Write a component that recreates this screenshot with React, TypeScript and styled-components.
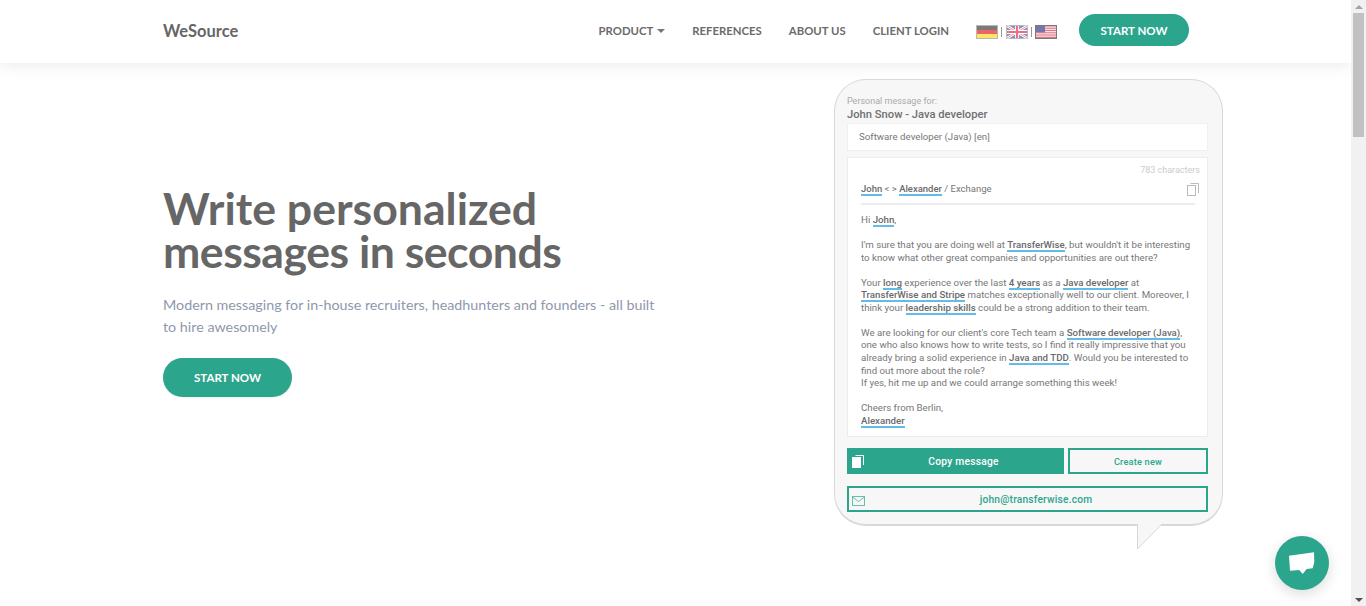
import React from 'react'
import styled, { createGlobalStyle } from 'styled-components'

const GREEN = '#2ca58d'
const BLUE = '#62bce8'

const GlobalStyle = createGlobalStyle`
  html, body {
    margin: 0;
    padding: 0;
    height: 606px;
    overflow: hidden;
    background: #fff;
  }
  * {
    box-sizing: border-box;
  }
`

const Shell = styled.div`
  display: flex;
  width: 1366px;
  height: 606px;
  font-family: Lato, 'Liberation Sans', sans-serif;
`
const Page = styled.div`
  flex: 1;
  min-width: 0;
`

// scrollbar
const Scrollbar = styled.div`
  width: 15px;
  background: #f1f1f1;
  display: flex;
  flex-direction: column;
  align-items: center;
`
const ScrollArrow = styled.div<{ $down?: boolean }>`
  width: 15px;
  height: 13px;
  flex: none;
  display: flex;
  align-items: center;
  justify-content: center;
  &::after {
    content: '';
    border-left: 4px solid transparent;
    border-right: 4px solid transparent;
    ${(p) => (p.$down ? 'border-top: 4px solid #505050;' : 'border-bottom: 4px solid #a3a3a3;')}
  }
`
const ScrollThumb = styled.div`
  width: 11px;
  height: 124px;
  background: #c1c1c1;
  flex: none;
`
const ScrollSpace = styled.div`
  flex: 1;
`

// navbar
const Nav = styled.header`
  height: 63px;
  background: #fff;
  box-shadow: 0 2px 14px rgba(120, 130, 160, 0.16);
  display: flex;
  align-items: center;
  justify-content: space-between;
  padding: 0 162px 3px 163px;
`
const Logo = styled.div`
  font-size: 16.5px;
  font-weight: 700;
  color: #666;
  padding-top: 1px;
`
const NavList = styled.nav`
  display: flex;
  align-items: center;
`
const NavLink = styled.a`
  font-size: 11.35px;
  font-weight: 700;
  color: #6b6b6b;
  margin-right: 27px;
  padding-top: 1px;
  display: flex;
  align-items: center;
`
const Caret = styled.span`
  display: inline-block;
  margin-left: 4px;
  border-left: 4px solid transparent;
  border-right: 4px solid transparent;
  border-top: 4px solid #777;
`
const Flags = styled.div`
  display: flex;
  align-items: center;
  margin-right: 22px;
  padding-top: 3px;
  opacity: 0.6;
`
const FlagDivider = styled.span<{ $narrow?: boolean }>`
  width: 1px;
  height: 10px;
  background: #555;
  margin: 0 ${(p) => (p.$narrow ? 3 : 4)}px 0 3px;
`
const NavButton = styled.a`
  width: 110px;
  height: 32px;
  border-radius: 16px;
  background: ${GREEN};
  color: #fff;
  font-size: 11.5px;
  font-weight: 700;
  display: flex;
  align-items: center;
  justify-content: center;
`

// hero
const Hero = styled.main`
  display: flex;
  justify-content: space-between;
  padding: 16px 128px 0 163px;
`
const Copy = styled.section`
  width: 500px;
  padding-top: 107px;
`
const Title = styled.h1`
  margin: 0;
  font-size: 44.6px;
  line-height: 43px;
  font-weight: 700;
  color: #666;
`
const TitleLine = styled.span<{ $tight?: boolean }>`
  display: block;
  white-space: nowrap;
  letter-spacing: ${(p) => (p.$tight ? '-0.5px' : '0')};
`
const Lead = styled.p`
  margin: 22px 0 0;
  font-size: 14.3px;
  line-height: 22px;
  color: #8f97ac;
`
const HeroButton = styled.a`
  margin-top: 20px;
  width: 129px;
  height: 39px;
  border-radius: 20px;
  background: ${GREEN};
  color: #fff;
  font-size: 11.5px;
  font-weight: 700;
  display: flex;
  align-items: center;
  justify-content: center;
  box-shadow: 0 1px 3px rgba(0, 0, 0, 0.06);
`

// message card
const Bubble = styled.section`
  position: relative;
  width: 389px;
  height: 447px;
  background: #f7f7f7;
  border: 1px solid #d8d8d8;
  border-bottom-width: 2px;
  border-radius: 32px;
  padding: 16px 14px 0 12px;
  font-family: Roboto, 'Liberation Sans', sans-serif;
`
const BubbleTail = styled.svg`
  position: absolute;
  left: 302px;
  bottom: -26px;
`
const Small = styled.div`
  font-size: 9px;
  line-height: 11px;
  color: #aaa;
`
const Recipient = styled.div`
  font-size: 11.2px;
  line-height: 15px;
  font-weight: 500;
  color: #707070;
  margin-bottom: 1px;
`
const Select = styled.div`
  height: 28px;
  background: #fff;
  border: 1px solid #f0f0f0;
  font-size: 9.7px;
  line-height: 26px;
  padding-left: 11px;
  color: #777;
`
const MessageBox = styled.div`
  margin-top: 6px;
  height: 280px;
  background: #fff;
  border: 1px solid #ececec;
  padding: 6px 7px 0 13px;
`
const Counter = styled.div`
  text-align: right;
  font-size: 9px;
  line-height: 12px;
  color: #ccc;
`
const MessageHead = styled.div`
  position: relative;
  margin: 6px 5px 0 0;
  height: 23px;
  border-bottom: 2px solid #ececec;
  font-size: 9.5px;
  line-height: 14px;
  color: #777;
`
const CopyGlyph = styled.div`
  position: absolute;
  right: -4px;
  top: 1px;
  display: flex;
`
const Body = styled.div`
  margin-top: 9px;
  font-size: 9.7px;
  line-height: 12.55px;
  color: #777;
  white-space: nowrap;
`
const Para = styled.p`
  margin: 0 0 12.55px;
`
const Mark = styled.span`
  font-weight: 500;
  color: #6a6a6a;
  border-bottom: 2px solid ${BLUE};
`
const ActionRow = styled.div`
  display: flex;
  gap: 4px;
  margin-top: 11px;
`
const CopyButton = styled.div`
  position: relative;
  width: 217px;
  height: 26px;
  padding-left: 16px;
  background: ${GREEN};
  color: #fff;
  font-size: 10.3px;
  font-weight: 500;
  display: flex;
  align-items: center;
  justify-content: center;
  letter-spacing: 0.2px;
`
const OutlineButton = styled.div<{ $small?: boolean; $inset?: number }>`
  position: relative;
  flex: 1;
  height: 26px;
  padding-left: ${(p) => p.$inset ?? 0}px;
  border: 2px solid ${GREEN};
  color: ${GREEN};
  font-size: ${(p) => (p.$small ? '9.2px' : '10.2px')};
  font-weight: 500;
  display: flex;
  align-items: center;
  justify-content: center;
  letter-spacing: 0.2px;
`
const EmailRow = styled.div`
  margin-top: 12px;
  display: flex;
`
const CopyIconSlot = styled.div`
  position: absolute;
  left: 5px;
  top: 7px;
  display: flex;
`
const MailIcon = styled.svg`
  position: absolute;
  left: 3px;
  top: 8px;
`

// chat
const ChatFab = styled.div`
  position: absolute;
  left: 1275px;
  top: 536px;
  width: 54px;
  height: 54px;
  border-radius: 50%;
  background: ${GREEN};
  box-shadow: 0 4px 14px rgba(0, 0, 0, 0.14);
  display: flex;
  align-items: center;
  justify-content: center;
`

const GermanFlag = () => (
  <svg width="22" height="14" viewBox="0 0 22 14">
    <rect width="22" height="14" fill="#888" />
    <rect x="1" y="1" width="20" height="4" fill="#222" />
    <rect x="1" y="5" width="20" height="4" fill="#e00000" />
    <rect x="1" y="9" width="20" height="4" fill="#ffd500" />
  </svg>
)

const UkFlag = () => (
  <svg width="22" height="14" viewBox="0 0 22 14">
    <rect width="22" height="14" fill="#888" />
    <rect x="1" y="1" width="20" height="12" fill="#2b4ea0" />
    <path d="M1 1l20 12M21 1L1 13" stroke="#fff" strokeWidth="2.6" />
    <path d="M1 1l20 12M21 1L1 13" stroke="#e0304a" strokeWidth="0.8" />
    <path d="M11 1v12M1 7h20" stroke="#fff" strokeWidth="4" />
    <path d="M11 1v12M1 7h20" stroke="#e0102f" strokeWidth="2.2" />
  </svg>
)

const UsFlag = () => (
  <svg width="22" height="14" viewBox="0 0 22 14">
    <rect width="22" height="14" fill="#222" />
    <rect x="1" y="1" width="20" height="12" fill="#fff" />
    <path d="M1 1.9h20M1 3.7h20M1 5.5h20M1 7.3h20M1 9.1h20M1 10.9h20M1 12.5h20" stroke="#c8102e" strokeWidth="0.95" />
    <rect x="1" y="1" width="9" height="6.4" fill="#1c1c72" />
  </svg>
)

const PagesIcon = ({ color, solid }: { color: string; solid?: boolean }) => (
  <svg width="12" height="13" viewBox="0 0 12 13" fill="none">
    <path d="M3.5 0.5h8v9.5" stroke={color} />
    <rect x="0.5" y="2.5" width="8" height="10" fill={solid ? color : 'none'} stroke={color} />
  </svg>
)

export default function App() {
  return (
    <Shell>
      <GlobalStyle />
      <Page>
        <Nav>
          <Logo>WeSource</Logo>
          <NavList>
            <NavLink>
              PRODUCT
              <Caret />
            </NavLink>
            <NavLink>REFERENCES</NavLink>
            <NavLink>ABOUT US</NavLink>
            <NavLink>CLIENT LOGIN</NavLink>
            <Flags>
              <GermanFlag />
              <FlagDivider />
              <UkFlag />
              <FlagDivider $narrow />
              <UsFlag />
            </Flags>
            <NavButton>START NOW</NavButton>
          </NavList>
        </Nav>
        <Hero>
          <Copy>
            <Title>
              <TitleLine>Write personalized</TitleLine>
              <TitleLine $tight>messages in seconds</TitleLine>
            </Title>
            <Lead>Modern messaging for in-house recruiters, headhunters and founders - all built to hire awesomely</Lead>
            <HeroButton>START NOW</HeroButton>
          </Copy>
          <Bubble>
            <Small>Personal message for:</Small>
            <Recipient>John Snow - Java developer</Recipient>
            <Select>Software developer (Java) [en]</Select>
            <MessageBox>
              <Counter>783 characters</Counter>
              <MessageHead>
                <Mark>John</Mark> &lt; &gt; <Mark>Alexander</Mark> / Exchange
                <CopyGlyph>
                  <PagesIcon color="#bbb" />
                </CopyGlyph>
              </MessageHead>
              <Body>
                <Para>
                  Hi <Mark>John</Mark>,
                </Para>
                <Para>
                  I'm sure that you are doing well at <Mark>TransferWise</Mark>, but wouldn't it be interesting
                  <br />
                  to know what other great companies and opportunities are out there?
                </Para>
                <Para>
                  Your <Mark>long</Mark> experience over the last <Mark>4 years</Mark> as a <Mark>Java developer</Mark> at
                  <br />
                  <Mark>TransferWise and Stripe</Mark> matches exceptionally well to our client. Moreover, I
                  <br />
                  think your <Mark>leadership skills</Mark> could be a strong addition to their team.
                </Para>
                <Para>
                  We are looking for our client's core Tech team a <Mark>Software developer (Java)</Mark>,
                  <br />
                  one who also knows how to write tests, so I find it really impressive that you
                  <br />
                  already bring a solid experience in <Mark>Java and TDD</Mark>. Would you be interested to
                  <br />
                  find out more about the role?
                  <br />
                  If yes, hit me up and we could arrange something this week!
                </Para>
                <Para>
                  Cheers from Berlin,
                  <br />
                  <Mark>Alexander</Mark>
                </Para>
              </Body>
            </MessageBox>
            <ActionRow>
              <CopyButton>
                <CopyIconSlot>
                  <PagesIcon color="#fff" solid />
                </CopyIconSlot>
                Copy message
              </CopyButton>
              <OutlineButton $small>Create new</OutlineButton>
            </ActionRow>
            <EmailRow>
              <OutlineButton $inset={17}>
                <MailIcon width="13" height="10" viewBox="0 0 13 10" fill="none">
                  <rect x="0.5" y="0.5" width="12" height="9" stroke={GREEN} strokeOpacity="0.7" />
                  <path d="M0.5 1l6 4.5 6-4.5" stroke={GREEN} strokeOpacity="0.7" />
                </MailIcon>
                john@transferwise.com
              </OutlineButton>
            </EmailRow>
            <BubbleTail width="30" height="26" viewBox="0 0 30 26">
              <path d="M0.5 0V25L25 0" fill="#f7f7f7" />
              <path d="M0.5 0V25L25 0" fill="none" stroke="#d8d8d8" strokeWidth="1" />
            </BubbleTail>
          </Bubble>
        </Hero>
      </Page>
      <Scrollbar>
        <ScrollArrow />
        <ScrollThumb />
        <ScrollSpace />
        <ScrollArrow $down />
      </Scrollbar>
      <ChatFab>
        <svg width="28" height="24" viewBox="0 0 28 24">
          <path d="M1 4.7L26 1.3 26.3 11 24.7 17.3 18.7 18 14.7 23 11.3 19 2 19.7Z" fill="#fff" />
        </svg>
      </ChatFab>
    </Shell>
  )
}
